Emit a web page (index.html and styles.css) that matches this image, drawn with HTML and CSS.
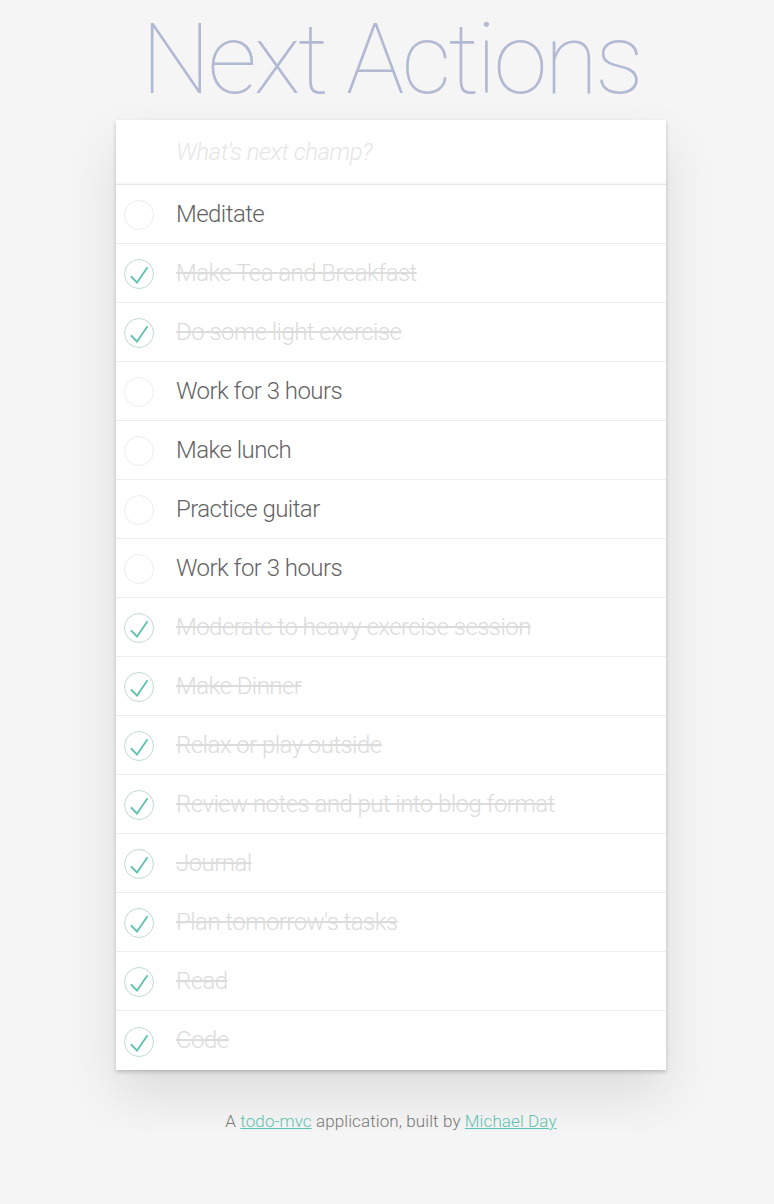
FILE: index.html
```html
<!DOCTYPE html>
<html>
<head>
<meta charset="utf-8">
<link rel="stylesheet" href="styles.css">
</head>
<body>
<div class="page">
  <h1 class="title">Next Actions</h1>
  <section class="app">
    <div class="new-todo">What's next champ?</div>
    <ul class="list">
      <li class="item"><span class="toggle"><svg viewBox="0 0 30 30"><circle cx="15" cy="15" r="14.5" class="ring"/></svg></span><span class="label">Meditate</span></li>
      <li class="item done"><span class="toggle"><svg viewBox="0 0 30 30"><circle cx="15" cy="15" r="14.5" class="ring"/><polyline points="7.5,18 13,23.5 23,9" class="tick"/></svg></span><span class="label">Make Tea and Breakfast</span></li>
      <li class="item done"><span class="toggle"><svg viewBox="0 0 30 30"><circle cx="15" cy="15" r="14.5" class="ring"/><polyline points="7.5,18 13,23.5 23,9" class="tick"/></svg></span><span class="label">Do some light exercise</span></li>
      <li class="item"><span class="toggle"><svg viewBox="0 0 30 30"><circle cx="15" cy="15" r="14.5" class="ring"/></svg></span><span class="label">Work for 3 hours</span></li>
      <li class="item"><span class="toggle"><svg viewBox="0 0 30 30"><circle cx="15" cy="15" r="14.5" class="ring"/></svg></span><span class="label">Make lunch</span></li>
      <li class="item"><span class="toggle"><svg viewBox="0 0 30 30"><circle cx="15" cy="15" r="14.5" class="ring"/></svg></span><span class="label">Practice guitar</span></li>
      <li class="item"><span class="toggle"><svg viewBox="0 0 30 30"><circle cx="15" cy="15" r="14.5" class="ring"/></svg></span><span class="label">Work for 3 hours</span></li>
      <li class="item done"><span class="toggle"><svg viewBox="0 0 30 30"><circle cx="15" cy="15" r="14.5" class="ring"/><polyline points="7.5,18 13,23.5 23,9" class="tick"/></svg></span><span class="label">Moderate to heavy exercise session</span></li>
      <li class="item done"><span class="toggle"><svg viewBox="0 0 30 30"><circle cx="15" cy="15" r="14.5" class="ring"/><polyline points="7.5,18 13,23.5 23,9" class="tick"/></svg></span><span class="label">Make Dinner</span></li>
      <li class="item done"><span class="toggle"><svg viewBox="0 0 30 30"><circle cx="15" cy="15" r="14.5" class="ring"/><polyline points="7.5,18 13,23.5 23,9" class="tick"/></svg></span><span class="label">Relax or play outside</span></li>
      <li class="item done"><span class="toggle"><svg viewBox="0 0 30 30"><circle cx="15" cy="15" r="14.5" class="ring"/><polyline points="7.5,18 13,23.5 23,9" class="tick"/></svg></span><span class="label">Review notes and put into blog format</span></li>
      <li class="item done"><span class="toggle"><svg viewBox="0 0 30 30"><circle cx="15" cy="15" r="14.5" class="ring"/><polyline points="7.5,18 13,23.5 23,9" class="tick"/></svg></span><span class="label">Journal</span></li>
      <li class="item done"><span class="toggle"><svg viewBox="0 0 30 30"><circle cx="15" cy="15" r="14.5" class="ring"/><polyline points="7.5,18 13,23.5 23,9" class="tick"/></svg></span><span class="label">Plan tomorrow's tasks</span></li>
      <li class="item done"><span class="toggle"><svg viewBox="0 0 30 30"><circle cx="15" cy="15" r="14.5" class="ring"/><polyline points="7.5,18 13,23.5 23,9" class="tick"/></svg></span><span class="label">Read</span></li>
      <li class="item done last"><span class="toggle"><svg viewBox="0 0 30 30"><circle cx="15" cy="15" r="14.5" class="ring"/><polyline points="7.5,18 13,23.5 23,9" class="tick"/></svg></span><span class="label">Code</span></li>
    </ul>
  </section>
  <footer class="info">A <a href="#">todo-mvc</a> application, built by <a href="#">Michael Day</a></footer>
</div>
</body>
</html>
```
FILE: styles.css
```css
html, body {
  margin: 0;
  padding: 0;
}
body {
  background: #f5f5f5;
  font-family: Roboto, "Liberation Sans", sans-serif;
  font-weight: 300;
  color: #4d4d4d;
  padding-left: 8px;
}
.page {
  width: 550px;
  margin: 0 auto;
  display: flex;
  flex-direction: column;
  align-items: stretch;
}
.title {
  margin: 0;
  height: 120px;
  font-size: 98px;
  line-height: 120px;
  font-weight: 100;
  letter-spacing: -3px;
  text-align: center;
  color: #b2b9d3;
  white-space: nowrap;
}
.app {
  background: #fff;
  box-shadow: 0 2px 4px 0 rgba(0, 0, 0, 0.2), 0 25px 50px 0 rgba(0, 0, 0, 0.1);
}
.new-todo {
  height: 64px;
  box-sizing: border-box;
  padding: 0 16px 0 60px;
  display: flex;
  align-items: center;
  font-size: 24px;
  font-style: italic;
  font-weight: 300;
  letter-spacing: -0.5px;
  color: #e6e6e6;
  box-shadow: inset 0 -2px 1px rgba(0, 0, 0, 0.03);
}
.list {
  list-style: none;
  margin: 0;
  padding: 0;
  border-top: 1px solid #e6e6e6;
}
.item {
  height: 59px;
  box-sizing: border-box;
  border-bottom: 1px solid #ededed;
  display: flex;
  align-items: center;
}
.item.last {
  border-bottom: none;
}
.toggle {
  width: 30px;
  height: 30px;
  margin: 2px 22px 0 8px;
  flex: none;
}
.toggle svg {
  display: block;
  width: 30px;
  height: 30px;
}
.ring {
  fill: none;
  stroke: #ededed;
  stroke-width: 1;
}
.done .ring {
  stroke: #bddad5;
}
.tick {
  fill: none;
  stroke: #5dc2af;
  stroke-width: 1.8;
  stroke-linecap: square;
  stroke-linejoin: miter;
}
.label {
  font-size: 24px;
  line-height: 29px;
  letter-spacing: -0.55px;
  color: #636363;
  white-space: nowrap;
}
.done .label {
  color: #dcdcdc;
  text-decoration: line-through;
}
.info {
  margin-top: 41px;
  text-align: center;
  font-size: 17px;
  line-height: 20px;
  letter-spacing: 0.1px;
  color: #777;
}
.info a {
  color: #5dc2af;
  text-decoration: underline;
}
```
